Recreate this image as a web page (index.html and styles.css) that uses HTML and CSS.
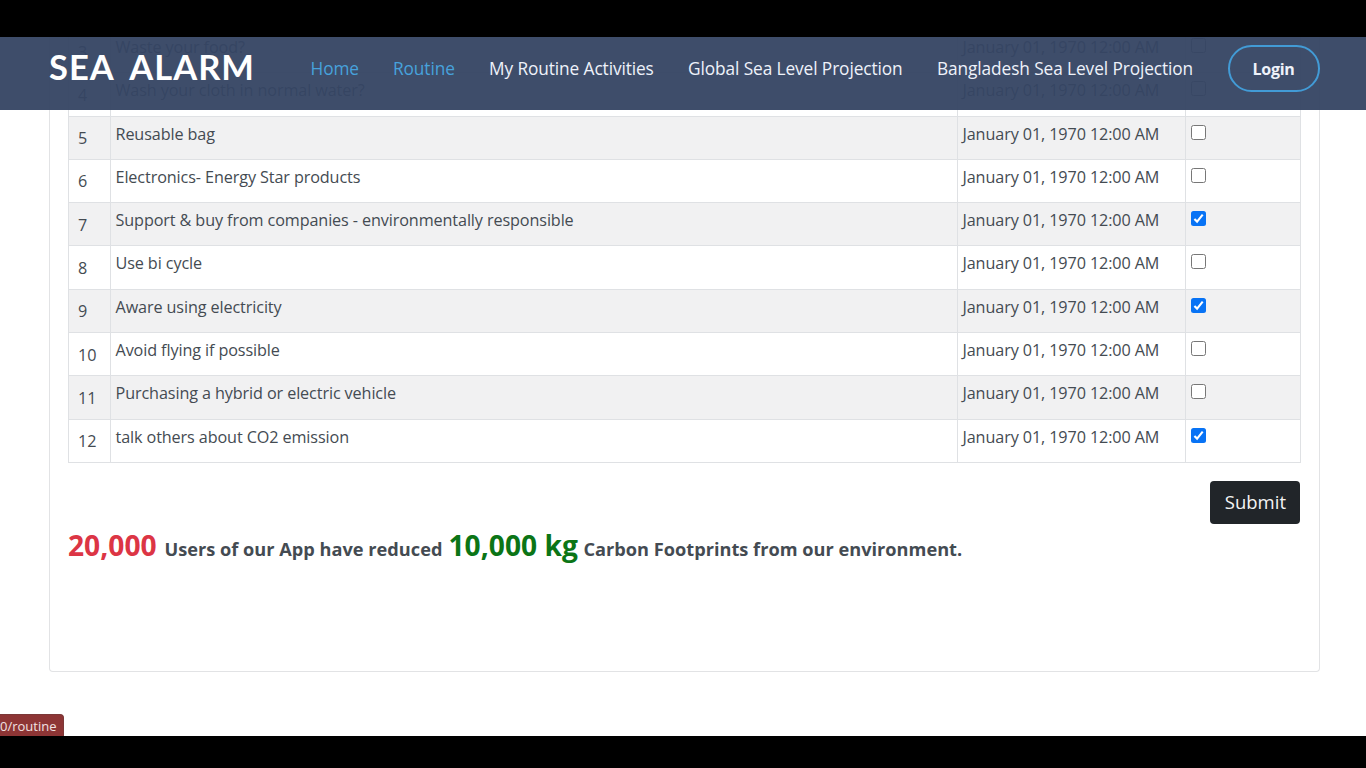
FILE: index.html
```
<!DOCTYPE html>
<html lang="en">
<head>
<meta charset="utf-8">
<title>Sea Alarm</title>
<link rel="stylesheet" href="styles.css">
</head>
<body>
<div class="viewport">
  <header class="header">
    <div class="logo">SEA ALARM</div>
    <nav class="nav">
      <a class="active">Home</a>
      <a class="active">Routine</a>
      <a class="medium">My Routine Activities</a>
      <a class="medium">Global Sea Level Projection</a>
      <a class="medium">Bangladesh Sea Level Projection</a>
    </nav>
    <a class="login">Login</a>
  </header>
  <main class="card">
    <div class="table">
      <div class="row"><span class="num">3</span><span>Waste your food?</span><span>January 01, 1970 12:00 AM</span><span><i class="check"></i></span></div>
      <div class="row"><span class="num">4</span><span>Wash your cloth in normal water?</span><span>January 01, 1970 12:00 AM</span><span><i class="check"></i></span></div>
      <div class="row"><span class="num">5</span><span>Reusable bag</span><span>January 01, 1970 12:00 AM</span><span><i class="check"></i></span></div>
      <div class="row"><span class="num">6</span><span>Electronics- Energy Star products</span><span>January 01, 1970 12:00 AM</span><span><i class="check"></i></span></div>
      <div class="row"><span class="num">7</span><span>Support &amp; buy from companies - environmentally responsible</span><span>January 01, 1970 12:00 AM</span><span><i class="check on"><svg viewBox="0 0 15 15"><path d="M3.4 7.9 6.1 10.6 11.7 3.7"/></svg></i></span></div>
      <div class="row"><span class="num">8</span><span>Use bi cycle</span><span>January 01, 1970 12:00 AM</span><span><i class="check"></i></span></div>
      <div class="row"><span class="num">9</span><span>Aware using electricity</span><span>January 01, 1970 12:00 AM</span><span><i class="check on"><svg viewBox="0 0 15 15"><path d="M3.4 7.9 6.1 10.6 11.7 3.7"/></svg></i></span></div>
      <div class="row"><span class="num">10</span><span>Avoid flying if possible</span><span>January 01, 1970 12:00 AM</span><span><i class="check"></i></span></div>
      <div class="row"><span class="num">11</span><span>Purchasing a hybrid or electric vehicle</span><span>January 01, 1970 12:00 AM</span><span><i class="check"></i></span></div>
      <div class="row"><span class="num">12</span><span>talk others about CO2 emission</span><span>January 01, 1970 12:00 AM</span><span><i class="check on"><svg viewBox="0 0 15 15"><path d="M3.4 7.9 6.1 10.6 11.7 3.7"/></svg></i></span></div>
    </div>
    <div class="actions"><button class="submit">Submit</button></div>
    <p class="summary"><b class="red">20,000</b><span>Users of our App have reduced</span><b class="green">10,000 kg</b><span>Carbon Footprints from our environment.</span></p>
  </main>
  <div class="status">0/routine</div>
</div>
</body>
</html>
```
FILE: styles.css
```
* { box-sizing: border-box; }
body {
  margin: 0;
  height: 768px;
  padding: 37px 0 32px;
  background: #000;
  overflow: hidden;
  font-family: "Open Sans", sans-serif;
  color: #444b52;
}
.viewport {
  position: relative;
  height: 699px;
  overflow: hidden;
  background: #fff;
}
.header {
  position: absolute;
  z-index: 2;
  top: 0;
  left: 0;
  width: 100%;
  height: 73px;
  padding: 0 46px 0 49px;
  display: flex;
  align-items: center;
  background: rgba(53, 69, 99, 0.955);
  color: #eef2fa;
}
.logo {
  width: 261.5px;
  padding-bottom: 13px;
  font: 700 34.5px/1 Lato, sans-serif;
  letter-spacing: 1px;
  word-spacing: 7.5px;
  white-space: nowrap;
  color: #fff;
}
.nav {
  flex: 1;
  display: grid;
  grid-template-columns: 82.5px 96px 199px 249px 1fr;
  padding-bottom: 10px;
  font-size: 17.3px;
  letter-spacing: -0.1px;
  line-height: 24px;
  white-space: nowrap;
}
.active { color: #47a2dc; }
.medium { font-weight: 500; }
.login {
  width: 92px;
  height: 47px;
  margin-bottom: 11px;
  padding-right: 1px;
  border: 2px solid #429bd6;
  border-radius: 24px;
  font-size: 16px;
  letter-spacing: -0.3px;
  font-weight: 700;
  line-height: 44px;
  text-align: center;
}
.card {
  width: 1271px;
  height: 643px;
  margin: -8px 0 0 49px;
  padding: 0 18px;
  border: 1px solid #e2e3e5;
  border-top: 0;
  border-radius: 0 0 4px 4px;
}
.table {
  width: 1233px;
  border-left: 1px solid #dfe1e4;
  border-bottom: 1px solid #dfe1e4;
}
.row {
  height: 43.3px;
  display: grid;
  grid-template-columns: 42px 847px 228px 1fr;
  border-top: 1px solid #dfe1e4;
  font-size: 16.2px;
  letter-spacing: -0.11px;
  line-height: 24px;
  white-space: nowrap;
}
.row:nth-child(odd) { background: #f1f1f2; }
.row span {
  padding: 5px 4px 0 4.5px;
  border-right: 1px solid #dfe1e4;
}
.row .num { padding: 9.5px 0 0 9px; }
.check {
  display: block;
  width: 15px;
  height: 15px;
  margin-top: 3px;
  border: 1px solid #777;
  border-radius: 2.5px;
  background: #fff;
}
.check.on { border: 0; background: #0873f5; }
.check svg { display: block; fill: none; stroke: #fff; stroke-width: 2.1; }
.actions {
  display: flex;
  justify-content: flex-end;
  padding: 18px 0.6px 0 0;
}
.submit {
  width: 90px;
  height: 43px;
  padding: 0 0 1px;
  border: 0;
  border-radius: 4px;
  background: #212529;
  color: #f4f4f4;
  font: 18.5px "Open Sans", sans-serif;
}
.summary {
  display: flex;
  align-items: baseline;
  margin: 1px 0 0;
  font-size: 18.2px;
  font-weight: 700;
  line-height: 40px;
  white-space: nowrap;
}
.summary b { font-size: 28.2px; font-weight: 700; }
.red { width: 96.5px; color: #dc3545; }
.red + span { width: 284px; }
.green { width: 135px; color: #0b7516; }
.status {
  position: absolute;
  left: 0;
  bottom: 0;
  width: 64px;
  height: 22px;
  border: 1px solid #7b3838;
  border-width: 1px 1px 0 0;
  border-radius: 0 4px 0 0;
  background: #8d3535;
  color: #f1e2e2;
  font-size: 13px;
  line-height: 23px;
}
```
